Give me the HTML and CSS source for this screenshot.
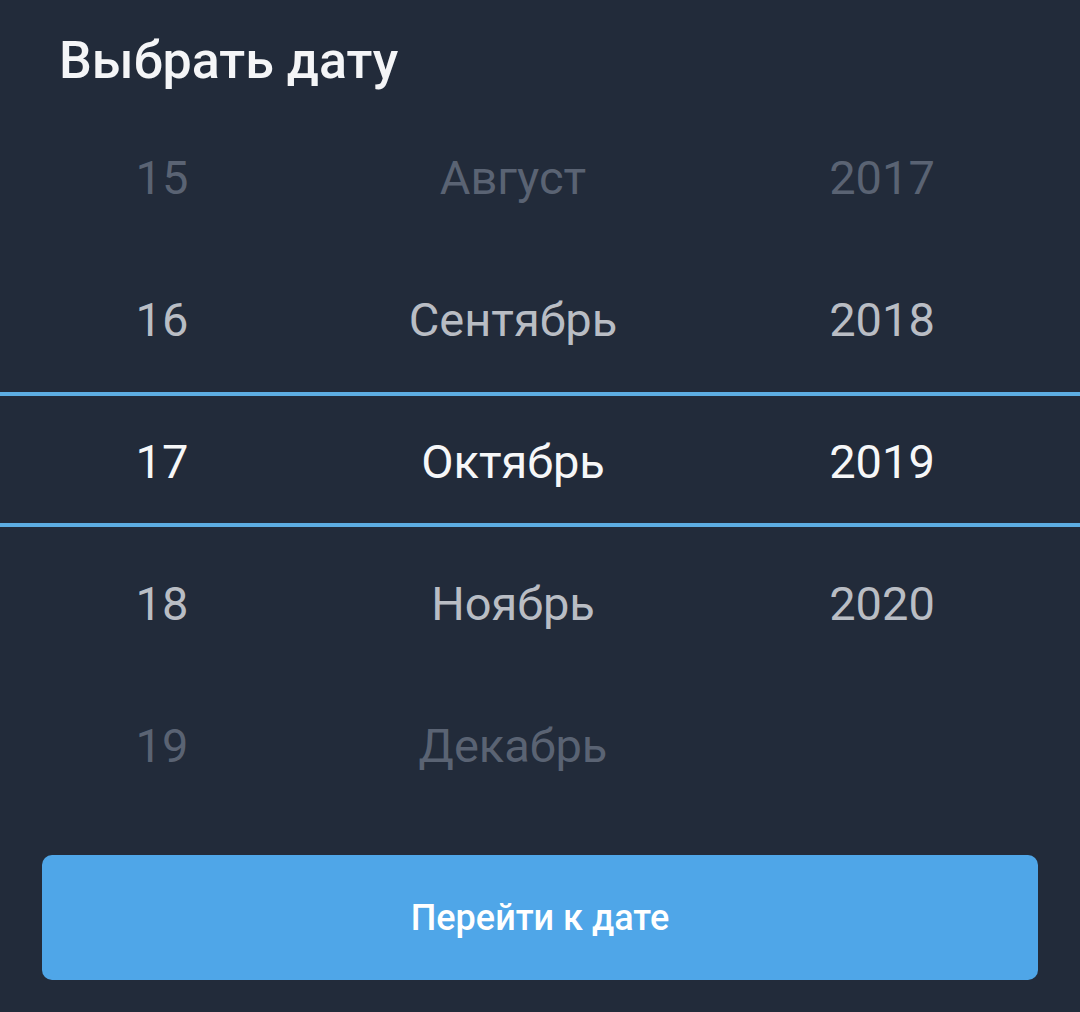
FILE: index.html
```html
<!DOCTYPE html>
<html lang="ru">
<head>
  <meta charset="UTF-8">
  <meta name="viewport" content="width=device-width, initial-scale=1.0">
  <title>Выбрать дату</title>
  <link rel="stylesheet" href="styles.css">
</head>
<body>
<div class="sheet">
  <h1 class="title">Выбрать дату</h1>

  <div class="picker">
    <div class="row far">
      <span>15</span><span>Август</span><span>2017</span>
    </div>
    <div class="row near">
      <span>16</span><span>Сентябрь</span><span>2018</span>
    </div>
    <div class="row selected">
      <span>17</span><span>Октябрь</span><span>2019</span>
    </div>
    <div class="row near">
      <span>18</span><span>Ноябрь</span><span>2020</span>
    </div>
    <div class="row far">
      <span>19</span><span>Декабрь</span><span></span>
    </div>
    <div class="divider top"></div>
    <div class="divider bottom"></div>
  </div>

  <button class="go">Перейти к дате</button>
</div>
</body>
</html>
```

FILE: styles.css
```css
body {
  margin: 0;
  background: #222b3a;
  font-family: Roboto, "Noto Sans", sans-serif;
}
.sheet {
  display: flex;
  flex-direction: column;
  padding: 33px 42px 32px;
}
.title {
  margin: 0 0 18px 17px;
  font-size: 52px;
  line-height: 56px;
  font-weight: 500;
  color: #f4f5f7;
}
.picker {
  position: relative;
  margin: 0 -42px;
}
.row {
  display: grid;
  grid-template-columns: 324px 378px 360px;
  justify-items: center;
  height: 142px;
  line-height: 142px;
  font-size: 47px;
}
.row.far {
  color: #5a6373;
}
.row.near {
  color: #b9bdc4;
}
.row.selected {
  color: #f6f7f8;
}
.divider {
  position: absolute;
  left: 0;
  right: 0;
  height: 4px;
  background: #5dade2;
}
.divider.top {
  top: 285px;
}
.divider.bottom {
  top: 416px;
}
.go {
  margin-top: 38px;
  height: 125px;
  border: 0;
  border-radius: 10px;
  background: #4fa6e8;
  color: #fff;
  font-family: inherit;
  font-size: 36px;
  font-weight: 500;
}
```
